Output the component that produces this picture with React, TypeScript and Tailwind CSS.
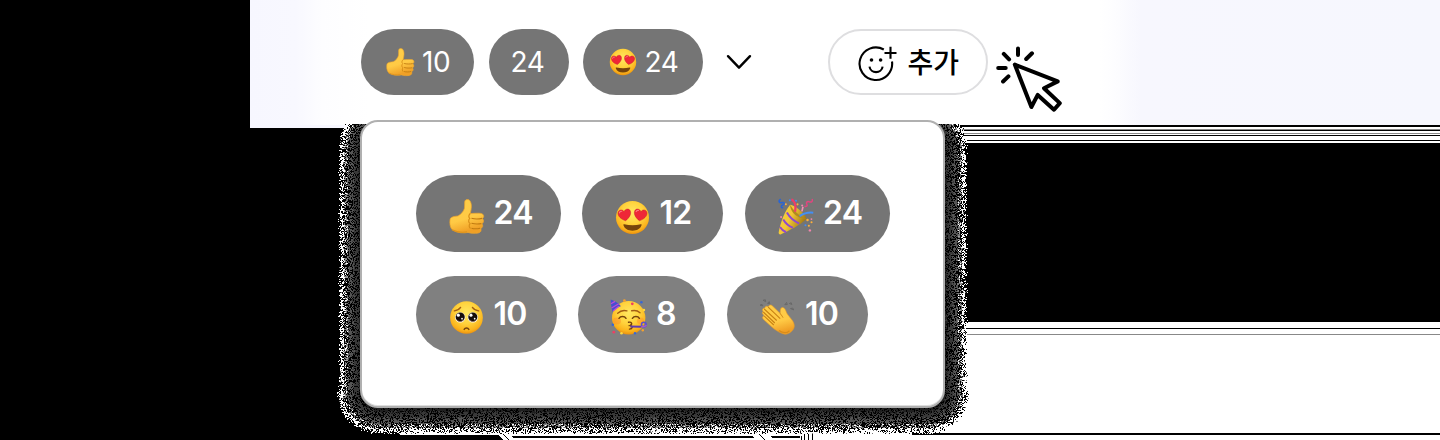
import type { ReactNode } from "react";

type IconProps = { className: string };

function Defs() {
  return (
    <svg className="absolute size-0" aria-hidden="true">
      <defs>
        <radialGradient id="face" cx="50%" cy="36%" r="66%">
          <stop offset="0" stopColor="#ffe861" />
          <stop offset="0.5" stopColor="#ffd23c" />
          <stop offset="0.82" stopColor="#fbb31c" />
          <stop offset="1" stopColor="#e88b0c" />
        </radialGradient>
        <linearGradient id="hand" x1="0" y1="0" x2="0.3" y2="1">
          <stop offset="0" stopColor="#ffce48" />
          <stop offset="0.65" stopColor="#ffca45" />
          <stop offset="1" stopColor="#f0a026" />
        </linearGradient>
        <linearGradient id="cone" x1="0" y1="0" x2="1" y2="0.5">
          <stop offset="0" stopColor="#f7d33f" />
          <stop offset="0.5" stopColor="#f3c736" />
          <stop offset="1" stopColor="#9c7413" />
        </linearGradient>
      </defs>
    </svg>
  );
}

function ThumbsUp({ className }: IconProps) {
  return (
    <svg viewBox="0 0 36 36" className={className}>
      <path
        d="M1.3 19.5C3 17.5 6.500 17.200 9 17c3-1.500 5.500-4.500 6.400-7.500C16 7 15.300 4.500 15.800 2.300 16.300.2 19.700-.1 21 1.900c2.200 3.500 1.400 8.100.2 12.600 4-.1 8-.5 10.700-.1 3.300.5 3.600 4 1.300 5.200 2 1.300 1.700 4.200-.4 5.200 1.600 1.500 1 4-1.100 4.700 1.100 2-.1 4.100-2.500 4.500-3.300.6-7.200.4-10.200-.6-4 1-10.500.5-14.500-1.800C.8 29.500.300 23.300 1.300 19.500Z"
        fill="url(#hand)"
        stroke="#efa529"
        strokeWidth=".7"
      />
      <path d="M22.500 19.200c3 .9 7.500.8 10.600.2M22.500 24.200c3 .9 6.800.9 9.900.4M22.500 29.200c2.500.7 6 .7 8.600 0" fill="none" stroke="#c17b10" strokeWidth="1.100" />
      <path d="M21.200 14.500c-1.500 1.500-2 3.500-.4 4.900-1.700 1.700-1.400 4.100.2 5.200-1.300 1.700-.9 3.900.6 5" fill="none" stroke="#d88e18" strokeWidth="1.200" />
      <path d="M3 30.800c5 2.600 10 3 15 2.100" fill="none" stroke="#df941d" strokeWidth="1.100" />
    </svg>
  );
}

function HeartEyes({ className }: IconProps) {
  return (
    <svg viewBox="0 0 36 36" className={className}>
      <circle cx="18" cy="18" r="17" fill="url(#face)" />
      <g fill="#ef2737" stroke="#c7152a" strokeWidth=".5">
        <path d="M10.900 21.300C6.500 20 2.500 16.500 3.200 12.900c.6-3 4.400-3.500 6.200-.9 1-3.100 5.100-3.600 6.300-.8 1.500 3.600-1.800 7.800-4.800 10.100Z" />
        <path d="M25.100 21.300c4.400-1.300 8.400-4.800 7.700-8.400-.6-3-4.400-3.500-6.200-.9-1-3.100-5.100-3.600-6.300-.8-1.500 3.600 1.800 7.800 4.800 10.100Z" />
      </g>
      <path d="M4.600 13.200c.3-1.200 1.200-1.800 2.300-1.600M21.800 11.900c.5-1 1.400-1.400 2.300-1.100" stroke="#ff7b83" strokeWidth="1.200" fill="none" strokeLinecap="round" />
      <path d="M9.500 25c5.400 1.200 11.600 1.200 17 0 .7-.1 1.100.3.800 1-1.300 3.800-4.700 5.600-9.300 5.600S10 29.800 8.700 26c-.3-.7.2-1.100.8-1Z" fill="#75430b" />
    </svg>
  );
}

function PartyPopper({ className }: IconProps) {
  return (
    <svg viewBox="0 0 36 36" className={className}>
      <path d="M12.800 6.600C17 7 27 14.500 28.800 20.300 23 26 12 32 3.500 35.400c-1 .3-2-.5-1.900-1.500C3 24 8 12 12.800 6.600Z" fill="url(#cone)" />
      <path d="M12.800 6.600c2.800 5.400 9.500 11.700 16 13.700-3.200-.1-6.800-.9-9.500-2.700-4-2.600-6.500-6.600-6.500-11Z" fill="#b08a20" />
      <path d="M9.600 14.200c2.400 4.200 7 8.400 12 10.600M6.100 21c2 3.600 5.600 6.500 9.400 8.100M2.900 28.300c1.400 2.300 3.600 4.200 6 5" stroke="#8f49ce" strokeWidth="1.900" fill="none" />
      <path d="M14 1.300c3.900 2.100 4.700 6.700 3.600 12" stroke="#ec3e68" strokeWidth="2.200" fill="none" />
      <path d="M22 17.600c4-2.700 8.500-3.800 13.300-3.300" stroke="#438ff5" strokeWidth="2" fill="none" />
      <path d="M3.600 1.200C.5 3.500 2.500 5 5 4.500c2.500-.5 2.800 1.600.6 2.400-2.200.8-1.800 2.700.4 2.600" stroke="#2965d5" strokeWidth="1.500" fill="none" />
      <path d="M34.300 1c.7 3-1.100 3.300-3 2.700-2-.7-3.300.7-2.200 2.500.9 1.700-.7 2.500-2.400 1.900" stroke="#e2457f" strokeWidth="1.500" fill="none" />
      <path d="M25.300 8.500 24.200 13" stroke="#f28fb5" strokeWidth="1.600" />
      <g fill="#ffb03b">
        <circle cx="8.600" cy="6" r="1" /><circle cx="20" cy="6.200" r="1" /><circle cx="29.700" cy="21.500" r="1.200" /><circle cx="33.600" cy="23.600" r="1" /><circle cx="31" cy="27" r="1" />
      </g>
      <g fill="#f285ad">
        <circle cx="4" cy="18.600" r="1" /><circle cx="24.500" cy="7.300" r="1" /><circle cx="32" cy="31.500" r="1.200" /><circle cx="33.500" cy="20.500" r=".9" />
      </g>
      <g fill="#418cf2">
        <circle cx="12.500" cy="2.200" r="1" /><circle cx="18.500" cy="2.600" r="1" /><circle cx="27.700" cy="26.600" r="1" />
      </g>
    </svg>
  );
}

function Pleading({ className }: IconProps) {
  return (
    <svg viewBox="0 0 36 36" className={className}>
      <circle cx="18" cy="18" r="16.800" fill="url(#face)" />
      <path d="M5.500 11.200c3-.4 5-1.500 6.400-3.600M30.500 11.200c-3-.4-5-1.500-6.400-3.600" stroke="#a25c12" strokeWidth="1.400" fill="none" strokeLinecap="round" />
      <circle cx="11.500" cy="17.800" r="5.300" fill="#fff" />
      <circle cx="24.500" cy="17.800" r="5.300" fill="#fff" />
      <circle cx="11.500" cy="17.500" r="4.700" fill="#160d0a" />
      <circle cx="24.500" cy="17.500" r="4.700" fill="#160d0a" />
      <g fill="#fff">
        <circle cx="9.600" cy="15.600" r="1.600" /><circle cx="22.600" cy="15.600" r="1.600" />
        <circle cx="13.400" cy="19.200" r=".9" /><circle cx="26.400" cy="19.200" r=".9" />
      </g>
      <path d="M8.200 20.500c1.800 2.200 4.900 2.200 6.600 0M21.200 20.500c1.800 2.200 4.900 2.200 6.600 0" stroke="#8b6a58" strokeWidth="1" fill="none" />
      <path d="M15.600 30.300c1-1.900 3.800-1.900 4.800 0" stroke="#75430b" strokeWidth="1.500" fill="none" strokeLinecap="round" />
    </svg>
  );
}

function Partying({ className }: IconProps) {
  return (
    <svg viewBox="0 0 37 36" className={className}>
      <circle cx="18.700" cy="18.800" r="16.700" fill="url(#face)" />
      <ellipse cx="7" cy="22" rx="4" ry="3.400" fill="#ff8a2a" opacity=".45" />
      <ellipse cx="30.500" cy="21.800" rx="3.600" ry="3.400" fill="#ff8a2a" opacity=".4" />
      <path d="M.7.5C5 2 8.600 4 11 7.200 8.300 7.900 4.200 10.600 2.700 13 1.500 9 .6 4.300.7.5Z" fill="#4550cf" />
      <path d="M1 4.700 5 2.400M1.500 9 8.800 4.800M3.300 11.700l5.500-4.500" stroke="#bd4bd5" strokeWidth="1.300" />
      <path d="M7.700 14.200c2.700-2.500 6-3.200 9.200-2.300M21.700 11.800c3-.8 6.200 0 8.300 1.900" stroke="#a35e12" strokeWidth="1.400" fill="none" strokeLinecap="round" />
      <path d="M9 19.300c1.500-2.300 5.600-2.300 7 0M22.400 19.300c1.500-2.300 5.600-2.300 7 0" stroke="#75430b" strokeWidth="1.500" fill="none" strokeLinecap="round" />
      <path d="M18.500 23.300c3-.8 4.500 1.700 1.500 3.300 3.300.3 2.700 3.300-.5 3.500" stroke="#75430b" strokeWidth="1.400" fill="none" strokeLinecap="round" />
      <path d="m20.300 27.600 11.200.1" stroke="#5f3bb4" strokeWidth="2" />
      <circle cx="33.800" cy="25.500" r="2.300" fill="none" stroke="#5a51cf" strokeWidth="1.600" />
      <path d="M31.500 27.700c2.300.1 4.500-.2 4.800-1.900" stroke="#a654d6" strokeWidth="1.200" fill="none" />
      <g fill="#ee3f63"><circle cx="22.300" cy="4.800" r="1.400" /><circle cx="3.800" cy="33.200" r="1.400" /></g>
      <g fill="#f5a12d"><circle cx="14.400" cy="1.700" r="1.400" /><circle cx="32.800" cy="31.200" r="1.200" /></g>
      <g fill="#ffd83c"><circle cx="11.500" cy="34.300" r="1.300" /><circle cx="34" cy="11" r="1.200" /></g>
      <g fill="#3767d6"><circle cx="31.400" cy="3.200" r="1.300" /><circle cx="2.800" cy="25.800" r="1.300" /><circle cx="25" cy="34.300" r="1.200" /></g>
    </svg>
  );
}

function Clap({ className }: IconProps) {
  return (
    <svg viewBox="0 0 36 36" className={className}>
      <path
        d="M4.200 12.500C2.600 10.700 4 8.900 5.700 9.300c.2-2.200 2-2.700 3.500-1.500C10 5.700 12.200 5.500 13.500 7l7.700 7.400c.2-1.900-.3-4.300 1.100-5.500 1.700-1.300 3.800.6 4.700 3.400.8 2.800 3 4.800 5.200 7.600 2.700 3.300 3.700 6.400 2.700 9.200-1.300 3.300-5 6-8.500 6.200-4.500-.5-9.700-4-13.500-7.200L4.300 20.200c-1.500-1.500-.5-3.300 1-3.200l-1.300-1.700c-1-1.200-.7-2.400.2-2.800Z"
        fill="url(#hand)"
        stroke="#e99b23"
        strokeWidth=".6"
      />
      <path d="m5.200 10 12.500 11.500M9.200 8.200l12 11.500M4.300 13l11.500 11M5.300 17.200l9.500 8.800" stroke="#c98213" strokeWidth="1.100" fill="none" />
      <path d="M21.200 14.400c.8 1.500 1.900 2.300 2.800 4.200" stroke="#c98213" strokeWidth="1" fill="none" />
      <path d="M20 31.500c3.500 2.500 7.500 3 10.500.2" stroke="#d98c1b" strokeWidth="1.200" fill="none" />
      <g fill="none" stroke="#666" strokeWidth=".9">
        <path d="m1 6.200 2-.9.800 1.600ZM4 1.200l2.400-.4.300 2ZM8.500 4.300l1.800-1.700.5 2.200ZM25.800 5.700l1.800-2.300.7 2.100ZM30.400 4.500l1.800-.8.700 1.800ZM31.500 9.600l2.200-.6 1 1.900Z" />
      </g>
    </svg>
  );
}

function ChevronIcon({ className }: IconProps) {
  return (
    <svg viewBox="0 0 26 16" className={className}>
      <path d="M2 2.200 13 13.700 24 2.200" fill="none" stroke="#000" strokeWidth="2.400" strokeLinecap="round" strokeLinejoin="round" />
    </svg>
  );
}

function SmilePlus({ className }: IconProps) {
  return (
    <svg viewBox="0 0 40 38" className={className}>
      <g fill="none" stroke="#000" strokeWidth="2.100">
        <path d="M25.800 4.500A16.300 16.300 0 1 0 34 16.500" />
        <path d="M32.500 1.800v12M26.500 8h12" />
        <path d="M11.500 21.600c.9 7.300 12.200 7.300 13.100 0" />
      </g>
      <circle cx="13.500" cy="15" r="1.800" />
      <circle cx="22.600" cy="15" r="1.800" />
    </svg>
  );
}

function ClickCursor({ className }: IconProps) {
  return (
    <svg viewBox="0 0 72 72" className={className}>
      <g fill="none" stroke="#000" strokeWidth="4" strokeLinecap="round" strokeLinejoin="round">
        <path d="M20.800 23.600 63.700 40.400 50 47.200 65.800 62.100 60 68.700 43.700 53.900 37.400 66Z" />
        <path d="M24 7.600v6.400M38 12.300l-5.800 5.700M9.800 12.900l5.300 5.400M4.200 27.100h7.500M9.100 40.500l5.300-5.100" />
      </g>
    </svg>
  );
}

/* Dithered halo that surrounds the open panel. */
const shades = ["#000000", "#202020", "#383838", "#555555", "#777777", "#a0a0a0", "#ffffff"];

function buildHalo() {
  const paths: string[] = shades.map(() => "");
  let seed = 48271;
  const rand = () => {
    seed = (seed * 16807) % 2147483647;
    return seed / 2147483647;
  };
  for (let y = 124; y < 434; y++) {
    for (let x = 335; x < 972; x++) {
      if (x > 379 && x < 926 && y < 404) continue;
      const dx = Math.max(379 - x, x - 926, 0);
      const dy = Math.max(146 - y, y - 391, 0);
      const d = Math.hypot(dx, dy) - 17;
      if (d < -2) continue;
      const t = d / (y > 391 ? 23.5 : 21.5);
      const edge = t + (rand() - 0.5) * 0.16;
      if (edge > 1.05) continue;
      const r = rand();
      let k: number;
      if (t > 0.84) k = r < 0.58 ? 6 : r < 0.95 ? 0 : 4;
      else if (t > 0.68) k = r < 0.5 ? 0 : r < 0.75 ? 4 : r < 0.88 ? 5 : 6;
      else {
        const dark = 0.25 + t * 0.35;
        k = r < dark ? 0 : Math.min(4, 1 + Math.floor(t * 3.8 + rand() * 0.7));
      }
      paths[k] += `M${x} ${y}h1v1h-1z`;
    }
  }
  return paths;
}

const halo = buildHalo();

function Backdrop() {
  return (
    <div className="absolute inset-0 flex flex-col bg-black">
      <div className="flex h-[125px]">
        <div className="w-[250px]" />
        <div className="w-[120px] bg-[linear-gradient(to_right,#f7f7ff_0%,#f8f8ff_38%,#fdfdff_60%,#fff_100%)]" />
        <div className="grow bg-white" />
        <div className="w-[340px] bg-[linear-gradient(to_right,#fff_0%,#fdfdff_4%,#f7f7fe_12%,#f6f7fe_100%)]" />
      </div>
      <div className="flex grow">
        <div className="w-[250px]" />
        <div className="w-[106px]">
          <div className="h-[3px] bg-[#f7f7ff]" />
        </div>
        <div className="w-[594px]" />
        <div className="flex grow flex-col">
          <div className="h-[2px] bg-black" />
          <div className="h-[2px] bg-white" />
          <div className="h-px bg-[#888]" />
          <div className="h-px bg-black" />
          <div className="h-[2px] bg-white" />
          <div className="h-px bg-[#888]" />
          <div className="h-px bg-white" />
          <div className="h-px bg-black" />
          <div className="h-[4px] bg-white" />
          <div className="h-px bg-black" />
          <div className="h-[2px] bg-white" />
          <div className="h-[179px] bg-black" />
          <div className="h-[6px] bg-white" />
          <div className="h-px bg-black" />
          <div className="h-[5px] bg-white" />
          <div className="h-px bg-[#888]" />
          <div className="h-[98px] bg-white" />
          <div className="h-[2px] bg-black" />
          <div className="grow bg-white" />
        </div>
      </div>
      <svg viewBox="0 0 1440 440" className="absolute inset-0 h-[440px] w-[1440px]" shapeRendering="crispEdges">
        <path d="M930 408h20v25h-38v2h38v5H503l-5-5H400v-3H920Z" fill="#fff" />
        <path d="M511 436h241l3 2H513ZM770 436h30v2h-27ZM912 433h38v2h-38Z" fill="#000" />
        <path d="m503 434 6 6M759 434l6 6M801.500 436v4M804.500 434v6M808.500 432v8M812.500 432v8" stroke="#000" />
        {halo.map((d, i) => (
          <path key={shades[i]} d={d} fill={shades[i]} />
        ))}
      </svg>
    </div>
  );
}

function Pill({ className, children }: { className: string; children: ReactNode }) {
  return <div className={`flex shrink-0 items-center rounded-full text-white ${className}`}>{children}</div>;
}

const small = "h-[66px] bg-[#757575] text-[28px] leading-none font-normal tracking-[-0.5px]";
const large = "h-[77px] bg-[#757575] pb-[2px] text-[32px] leading-none font-semibold tracking-[-0.8px]";
const largeMuted = "h-[77px] bg-[#808080] pb-[1px] text-[32px] leading-none font-semibold tracking-[-0.8px]";

export default function App() {
  return (
    <div className="relative h-[440px] w-[1440px] overflow-hidden font-['Inter','Noto_Sans_CJK_KR',sans-serif]">
      <Defs />
      <Backdrop />
      <main className="relative flex flex-col pt-[29px] pl-[360px]">
        <div className="flex h-[66px] items-center">
          <Pill className={`${small} ml-[0.5px] w-[113.5px] gap-[7px] pl-[25.5px]`}>
            <ThumbsUp className="size-[29px]" />
            <span>10</span>
          </Pill>
          <Pill className={`${small} ml-[14.5px] w-[80px] pl-[22px]`}>24</Pill>
          <Pill className={`${small} ml-[14.5px] w-[119.5px] gap-[7.5px] pl-[26px]`}>
            <HeartEyes className="size-[28px]" />
            <span>24</span>
          </Pill>
          <ChevronIcon className="ml-[23.5px] h-[16px] w-[26px]" />
          <button className="ml-[76px] flex h-[66px] w-[160px] shrink-0 items-center rounded-full border-2 border-[#dedee0] bg-white pl-[28px]">
            <SmilePlus className="mt-[3px] h-[38px] w-[40px]" />
            <span className="-mt-[2px] ml-[9.5px] font-['Noto_Sans_CJK_KR',sans-serif] text-[28px] leading-none font-medium text-black">추가</span>
          </button>
          <ClickCursor className="mt-[30px] ml-[6px] size-[72px] shrink-0" />
        </div>
        <section className="mt-[25px] flex h-[288px] w-[585px] flex-col gap-[23.5px] rounded-[18px] border-2 border-[#b0b0b0] bg-white pt-[53.2px] pl-[53.5px] shadow-[inset_0_-1px_0_#dedede]">
          <div className="flex">
            <Pill className={`${large} w-[145px] pl-[33px]`}>
              <ThumbsUp className="mt-[9px] size-[36px]" />
              <span className="ml-[9px]">24</span>
            </Pill>
            <Pill className={`${large} ml-[21.5px] w-[141px] pl-[33px]`}>
              <HeartEyes className="mt-[9px] size-[35px]" />
              <span className="ml-[9.5px]">12</span>
            </Pill>
            <Pill className={`${large} ml-[22px] w-[145px] pl-[32px]`}>
              <PartyPopper className="mt-[8px] size-[37px]" />
              <span className="ml-[9px]">24</span>
            </Pill>
          </div>
          <div className="flex">
            <Pill className={`${largeMuted} w-[141px] pl-[33px]`}>
              <Pleading className="mt-[7px] size-[35px]" />
              <span className="ml-[10px]">10</span>
            </Pill>
            <Pill className={`${largeMuted} ml-[21.5px] w-[127px] pl-[32px]`}>
              <Partying className="mt-[6px] h-[36px] w-[37px]" />
              <span className="ml-[9px]">8</span>
            </Pill>
            <Pill className={`${largeMuted} ml-[22px] w-[141px] pl-[32px]`}>
              <Clap className="mt-[7px] size-[36px]" />
              <span className="ml-[10px]">10</span>
            </Pill>
          </div>
        </section>
      </main>
    </div>
  );
}
